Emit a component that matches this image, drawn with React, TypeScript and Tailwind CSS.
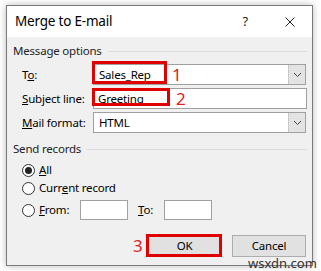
import React from 'react';

const font = { fontFamily: '"Noto Sans", "Open Sans", sans-serif' };

const RedBox = ({ className }: { className: string }) => (
  <div className={`absolute border-[3px] border-[#e10000] pointer-events-none ${className}`} />
);

const Mark = ({ n, className }: { n: string; className: string }) => (
  <span className={`absolute text-[17px] leading-none tracking-normal text-[#e02020] ${className}`}>{n}</span>
);

const Chevron = () => (
  <svg width="9" height="6" viewBox="0 0 9 6" fill="none">
    <path d="M1 1 L4.5 4.5 L8 1" stroke="#444" strokeWidth="1" />
  </svg>
);

const Combo = ({ value }: { value: string }) => (
  <div className="flex h-[21px] flex-1 border border-[#a0a0a0] bg-white">
    <div className="flex flex-1 items-center pl-[5px] text-black">{value}</div>
    <div className="flex w-[17px] items-center justify-center bg-[#e3e3e3] border-l border-[#c8c8c8]">
      <Chevron />
    </div>
  </div>
);

const GroupLabel = ({ children }: { children: React.ReactNode }) => (
  <div className="flex h-[16px] items-center pl-[6px] pr-[5px]">
    <span className="text-[#222]">{children}</span>
    <div className="ml-[6px] h-px flex-1 bg-[#dcdcdc]" />
  </div>
);

const Radio = ({ checked }: { checked?: boolean }) => (
  <div className="flex h-[13px] w-[13px] items-center justify-center rounded-full border border-[#333] bg-white">
    {checked && <div className="h-[7px] w-[7px] rounded-full bg-[#222]" />}
  </div>
);

export default function App() {
  return (
    <div
      className="relative h-[271px] w-[321px] bg-white pl-[6px] pt-[5px] text-[11.5px] tracking-[-0.2px]"
      style={font}
    >
      <div className="flex h-[261px] w-[307px] flex-col border border-[#7a7a7a] bg-[#f0f0f0] shadow-[0_0_7px_rgba(0,0,0,0.28)]">
        {/* title bar */}
        <div className="flex h-[31px] items-center bg-white pl-[8px] pr-[17px]">
          <span className="text-[13.5px] tracking-[-0.2px] text-black">Merge to E-mail</span>
          <div className="flex-1" />
          <span className="text-[13px] text-[#222]">?</span>
          <svg className="ml-[37px]" width="10" height="10" viewBox="0 0 10 10">
            <path d="M0.5 0.5 L9.5 9.5 M9.5 0.5 L0.5 9.5" stroke="#222" strokeWidth="1" />
          </svg>
        </div>

        <div className="mt-[6px]">
          <GroupLabel>Message options</GroupLabel>
        </div>

        {/* To */}
        <div className="mt-[5px] flex items-center pl-[15px] pr-[6px]">
          <span className="w-[71px] text-black">
            T<u>o</u>:
          </span>
          <div className="relative flex flex-1">
            <Combo value="Sales_Rep" />
            <RedBox className="-left-[1px] -top-[3px] h-[23px] w-[75px]" />
            <Mark n="1" className="left-[79px] top-[2px]" />
          </div>
        </div>

        {/* Subject */}
        <div className="mt-[3px] flex items-center pl-[15px] pr-[5px]">
          <span className="w-[71px] text-black">
            <u>S</u>ubject line:
          </span>
          <div className="relative flex h-[21px] flex-1 items-center border border-[#a0a0a0] bg-white pl-[4px] text-black">
            Greeting
            <RedBox className="-left-[2px] -top-[1px] h-[18px] w-[78px]" />
            <Mark n="2" className="left-[82px] top-[1px]" />
          </div>
        </div>

        {/* Mail format */}
        <div className="mt-[3px] flex items-center pl-[15px] pr-[6px]">
          <span className="w-[71px] text-black">
            <u>M</u>ail format:
          </span>
          <Combo value="HTML" />
        </div>

        <div className="mt-[8px]">
          <GroupLabel>Send records</GroupLabel>
        </div>

        <div className="mt-[4px] flex h-[18px] items-center gap-[4px] pl-[15px] text-black">
          <Radio checked />
          <span>
            <u>A</u>ll
          </span>
        </div>
        <div className="flex h-[18px] items-center gap-[4px] pl-[15px] text-black">
          <Radio />
          <span>
            Curr<u>e</u>nt record
          </span>
        </div>
        <div className="mt-[3px] flex h-[20px] items-center pl-[15px] text-black">
          <Radio />
          <span className="ml-[4px] w-[41px]">
            <u>F</u>rom:
          </span>
          <div className="h-[20px] w-[48px] border border-[#a0a0a0] bg-white" />
          <span className="ml-[10px] w-[26px]">
            <u>T</u>o:
          </span>
          <div className="h-[20px] w-[48px] border border-[#a0a0a0] bg-white" />
        </div>

        {/* buttons */}
        <div className="mt-[15px] flex items-center justify-end gap-[11px] pr-[6px] text-black">
          <div className="relative">
            <div className="flex h-[22px] w-[73px] items-center justify-center border border-[#adadad] bg-[#e1e1e1]">
              OK
            </div>
            <RedBox className="-left-[2px] -top-[1px] h-[23px] w-[76px]" />
            <Mark n="3" className="-left-[15px] top-[2px]" />
          </div>
          <div className="flex h-[22px] w-[74px] items-center justify-center border border-[#adadad] bg-[#e1e1e1]">
            Cancel
          </div>
        </div>
      </div>
      <span className="absolute left-[248px] top-[256px] text-[13px] leading-[14px] tracking-normal text-[#333]">
        wsxdn.com
      </span>
    </div>
  );
}
